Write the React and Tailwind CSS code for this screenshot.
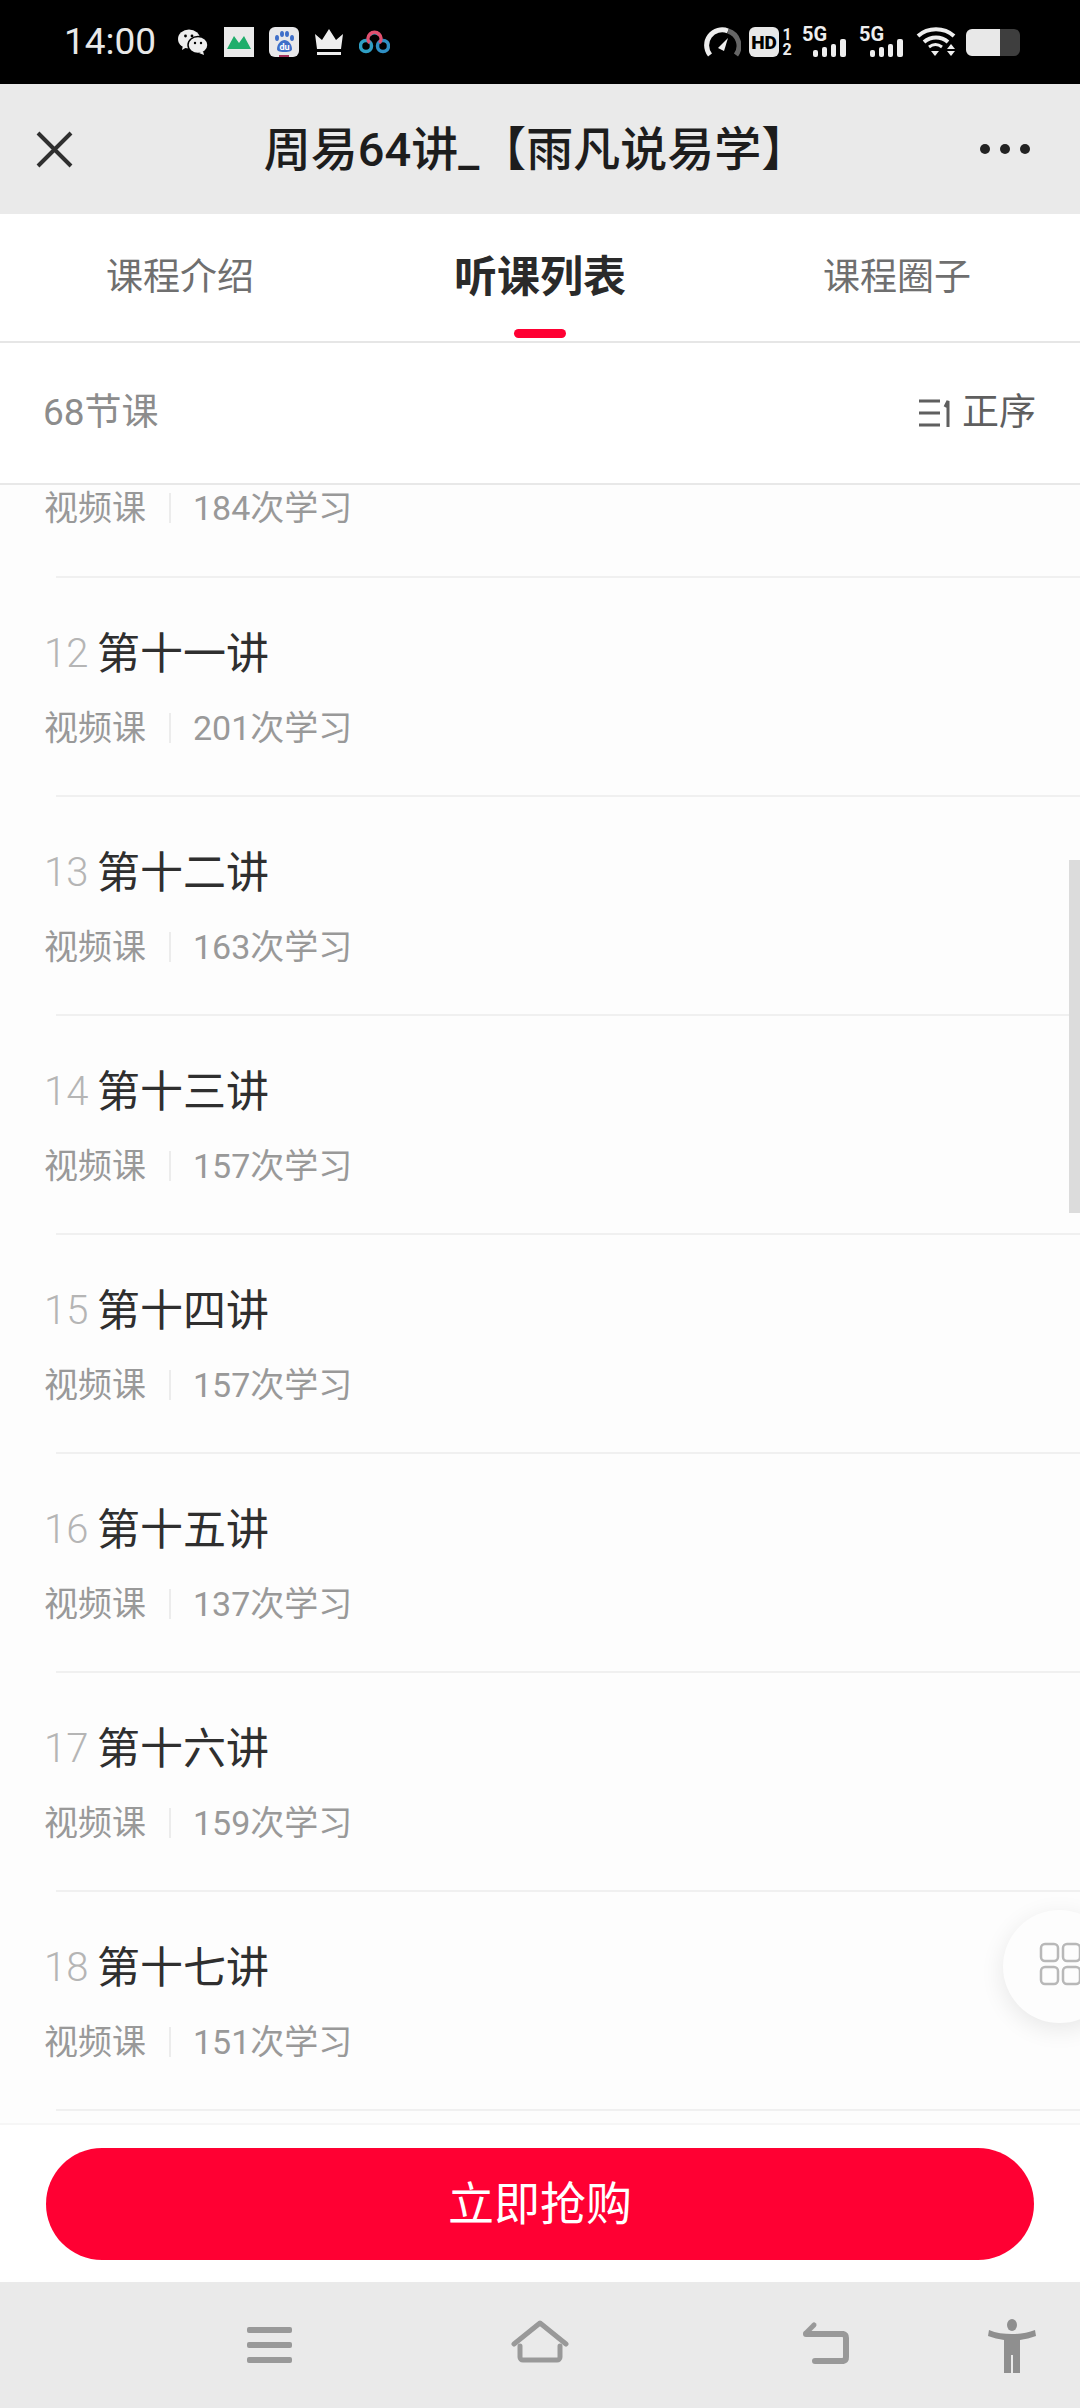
import React from "react";

const lessons = [
  { no: 12, title: "第十一讲", count: 201 },
  { no: 13, title: "第十二讲", count: 163 },
  { no: 14, title: "第十三讲", count: 157 },
  { no: 15, title: "第十四讲", count: 157 },
  { no: 16, title: "第十五讲", count: 137 },
  { no: 17, title: "第十六讲", count: 159 },
  { no: 18, title: "第十七讲", count: 151 },
];

function Meta({ count }) {
  return (
    <div className="flex items-center text-[34px] leading-[40px] text-[#999999]">
      <span>视频课</span>
      <span className="ml-[23px] h-[30px] w-[2px] bg-[#ececec]" />
      <span className="ml-[22px]">{count}次学习</span>
    </div>
  );
}

function StatusLeft() {
  return (
    <div className="flex items-center">
      <span className="text-[37px] leading-[44px] text-[#e8e8e8]">14:00</span>
      {/* wechat */}
      <svg className="ml-[22px]" width="30" height="26" viewBox="0 0 30 26">
        <ellipse cx="11" cy="10" rx="11" ry="9.5" fill="#eee" />
        <path d="M5 16l-1 5 5-3z" fill="#eee" />
        <ellipse cx="20" cy="16" rx="10" ry="8.5" fill="#eee" stroke="#000" strokeWidth="1.5" />
        <path d="M25 22l1 4-5-2z" fill="#eee" />
        <circle cx="7.5" cy="7" r="1.4" fill="#000" />
        <circle cx="14" cy="7" r="1.4" fill="#000" />
        <circle cx="17" cy="14" r="1.2" fill="#000" />
        <circle cx="23" cy="14" r="1.2" fill="#000" />
      </svg>
      {/* mountain */}
      <svg className="ml-[16px]" width="30" height="30" viewBox="0 0 30 30">
        <rect width="30" height="30" fill="#eaeaea" />
        <path d="M3 22L10 9l5 7 5-7 7 13z" fill="#1fae6b" />
      </svg>
      {/* baidu */}
      <svg className="ml-[15px]" width="30" height="30" viewBox="0 0 30 30">
        <rect width="30" height="30" rx="6" fill="#e8e8ea" />
        <ellipse cx="8" cy="11" rx="2" ry="3" fill="#3f6fc9" />
        <ellipse cx="13" cy="7" rx="2" ry="3" fill="#3f6fc9" />
        <ellipse cx="18" cy="7" rx="2" ry="3" fill="#3f6fc9" />
        <ellipse cx="23" cy="11" rx="2" ry="3" fill="#3f6fc9" />
        <path d="M8 22c0-5 4-9 7.500-9s7.500 4 7.500 9c0 2-2 3-7.500 3s-7.500-1-7.500-3z" fill="#3f6fc9" />
        <text x="15.500" y="23" textAnchor="middle" fontSize="9" fontWeight="700" fill="#fff" fontFamily="Roboto">du</text>
        <rect x="10" y="28" width="10" height="2" fill="#a5325e" />
      </svg>
      {/* crown */}
      <svg className="ml-[15px]" width="30" height="28" viewBox="0 0 30 28">
        <path d="M1 6l7 6 7-11 7 11 7-6-2 15H3z" fill="#eee" />
        <rect x="3" y="24" width="24" height="3" fill="#eee" />
      </svg>
      {/* loop logo */}
      <svg className="ml-[15px]" width="31" height="26" viewBox="0 0 31 26" fill="none">
        <path d="M11 5.500a7 7 0 0 1 9 0" stroke="#2f9fc4" strokeWidth="3.500" />
        <circle cx="7" cy="17" r="5.500" stroke="#2f9fc4" strokeWidth="3.500" />
        <circle cx="24" cy="17" r="5.500" stroke="#2f8fc4" strokeWidth="3.500" />
        <path d="M10.500 14a6.500 6.500 0 1 1 10 0" stroke="#e0506f" strokeWidth="3.500" />
      </svg>
    </div>
  );
}

function Signal() {
  return (
    <div className="relative h-[30px] w-[45px]">
      <span className="absolute left-0 top-[-4px] text-[20px] font-bold leading-[22px] text-[#eee]">5G</span>
      <svg className="absolute bottom-0 right-0" width="34" height="18" viewBox="0 0 34 18" fill="#eee">
        <rect x="0" y="11" width="5" height="7" rx="2" />
        <rect x="9" y="8" width="5" height="10" rx="2" />
        <rect x="18" y="5" width="5" height="13" rx="2" />
        <rect x="27" y="0" width="6" height="18" rx="2" />
      </svg>
    </div>
  );
}

function StatusRight() {
  return (
    <div className="flex items-center">
      {/* speed */}
      <svg width="37" height="30" viewBox="0 0 37 30" fill="none">
        <path d="M6 28A15.500 15.500 0 0 1 24 4" stroke="#eee" strokeWidth="5" />
        <path d="M24 4A15.500 15.500 0 0 1 32 28" stroke="#666" strokeWidth="5" />
        <path d="M14 21l10-10-4 13z" fill="#eee" />
      </svg>
      <div className="ml-[8px] flex h-[30px] w-[30px] items-center justify-center rounded-[6px] bg-[#e8e8e8] text-[19px] font-black leading-none text-black">
        HD
      </div>
      <div className="ml-[3px] flex w-[10px] flex-col items-center text-[16px] font-bold leading-[15px] text-[#eee]">
        <span>1</span>
        <span>2</span>
      </div>
      <div className="ml-[10px]">
        <Signal />
      </div>
      <div className="ml-[12px]">
        <Signal />
      </div>
      {/* wifi */}
      <svg className="ml-[12px]" width="40" height="30" viewBox="0 0 40 30" fill="none" stroke="#eee" strokeWidth="4">
        <path d="M2 9c10-9 26-9 36 0" />
        <path d="M8 15c7-6 17-6 24 0" />
        <path d="M13 20c4-3 9-3 13 0" strokeWidth="3" />
        <path d="M15 24h8l-4 5z" fill="#eee" stroke="none" />
        <path d="M35 17l4 5h-8z" fill="#eee" stroke="none" />
        <path d="M31 24h8l-4 5z" fill="#eee" stroke="none" />
      </svg>
      {/* battery */}
      <div className="ml-[10px] flex h-[27px] w-[54px] overflow-hidden rounded-[6px]">
        <div className="w-[34px] bg-[#e8e8e8]" />
        <div className="flex-1 bg-[#3e3e3e]" />
      </div>
    </div>
  );
}

export default function App() {
  return (
    <div className="relative flex h-[2408px] w-[1080px] flex-col overflow-hidden bg-[#fdfdfd] font-['Roboto','Noto_Sans_CJK_SC',sans-serif]">
      {/* status bar */}
      <div className="flex h-[84px] shrink-0 items-center justify-between bg-black pl-[64px] pr-[60px]">
        <StatusLeft />
        <StatusRight />
      </div>

      {/* title bar */}
      <div className="flex h-[130px] shrink-0 items-center justify-between bg-[#eaeaea] pl-[36px] pr-[50px]">
        <svg width="37" height="37" viewBox="0 0 37 37" stroke="#2f2f2f" strokeWidth="4" fill="none">
          <path d="M2 2l33 33M35 2L2 35" />
        </svg>
        <div className="ml-[19px] mt-[2px] text-[47px] font-medium leading-[50px] text-[#1d1d1d]">周易64讲_【雨凡说易学】</div>
        <div className="flex gap-[10px]">
          <span className="h-[10px] w-[10px] rounded-full bg-[#222]" />
          <span className="h-[10px] w-[10px] rounded-full bg-[#222]" />
          <span className="h-[10px] w-[10px] rounded-full bg-[#222]" />
        </div>
      </div>

      {/* tabs */}
      <div className="grid h-[129px] shrink-0 grid-cols-3 border-b-2 border-[#e6e6e6] bg-white">
        <div className="flex justify-center pt-[40px] text-[37px] leading-[48px] text-[#6f6f6f]">课程介绍</div>
        <div className="flex flex-col items-center pt-[37px]">
          <span className="text-[43px] font-bold leading-[52px] text-[#2a2a2a]">听课列表</span>
          <span className="mt-[26px] h-[9px] w-[52px] rounded-full bg-[#ff0033]" />
        </div>
        <div className="flex justify-center pr-[6px] pt-[40px] text-[37px] leading-[48px] text-[#6f6f6f]">课程圈子</div>
      </div>

      {/* count + sort */}
      <div className="flex h-[142px] shrink-0 items-center justify-between border-b-2 border-[#e8e8e8] bg-white pl-[43px] pr-[44px]">
        <span className="text-[37px] leading-[44px] text-[#8c8c8c]">68节课</span>
        <div className="flex items-center text-[37px] leading-[44px] text-[#5f5f5f]">
          <svg width="34" height="30" viewBox="0 0 34 30" fill="none" stroke="#5f5f5f" strokeWidth="3">
            <path d="M0 3h21M0 15h21M0 27h21" />
            <path d="M29 29V3l-3 6" />
          </svg>
          <span className="ml-[9px]">正序</span>
        </div>
      </div>

      {/* lesson list */}
      <div className="min-h-0 flex-1 overflow-hidden">
        <div className="h-[91px] pl-[44px] pt-[3px]">
          <Meta count={184} />
        </div>
        <div className="ml-[56px] h-[2px] bg-[#f0f0f0]" />
        {lessons.map((l) => (
          <div key={l.no}>
            <div className="h-[217px] pl-[44px] pt-[51px]">
              <div className="flex items-center leading-[50px]">
                <span className="w-[53px] text-[40px] font-light text-[#b5b5b5]">{l.no}</span>
                <span className="text-[43px] text-[#2f2f2f]">{l.title}</span>
              </div>
              <div className="mt-[29px]">
                <Meta count={l.count} />
              </div>
            </div>
            <div className="ml-[56px] h-[2px] bg-[#f0f0f0]" />
          </div>
        ))}
      </div>

      {/* buy button */}
      <div className="h-[159px] shrink-0 border-t-2 border-[#f6f6f6] bg-white px-[46px] pt-[23px]">
        <button className="flex h-[112px] w-full items-center justify-center rounded-full bg-[#ff0033] text-[46px] leading-none text-white">
          立即抢购
        </button>
      </div>

      {/* system nav */}
      <div className="flex h-[126px] shrink-0 items-start bg-[#eaeaea] pl-[247px] pt-[37px]">
        <svg className="mt-[8px]" width="45" height="36" viewBox="0 0 45 36" fill="#999">
          <rect y="0" width="45" height="6" rx="2" />
          <rect y="15" width="45" height="6" rx="2" />
          <rect y="30" width="45" height="6" rx="2" />
        </svg>
        <svg className="ml-[219px] mt-[1px]" width="58" height="43" viewBox="0 0 58 43" fill="none" stroke="#999" strokeWidth="5" strokeLinecap="round" strokeLinejoin="round">
          <path d="M3 24L29 3l26 21" />
          <path d="M9 26v11a3 3 0 0 0 3 3h34a3 3 0 0 0 3-3V26" />
        </svg>
        <svg className="ml-[232px] mt-[2px]" width="49" height="43" viewBox="0 0 49 43" fill="none" stroke="#999" strokeWidth="6" strokeLinecap="round" strokeLinejoin="round">
          <path d="M5 13h37a4 4 0 0 1 3 4v19a4 4 0 0 1-3 4H14" />
          <path d="M5 12l8-8" strokeWidth="5" />
        </svg>
        <svg className="ml-[138px]" width="48" height="54" viewBox="0 0 48 54" fill="#8f8f8f">
          <ellipse cx="24" cy="6" rx="5" ry="6" />
          <path d="M1 11c7 3 15 4 23 4s16-1 23-4l1 6c-5 2-11 3-16 4v33h-7V36h-2v18h-7V21c-5-1-11-2-16-4z" />
        </svg>
      </div>

      {/* scrollbar */}
      <div className="absolute left-[1069px] top-[860px] h-[353px] w-[11px] bg-[#dcdcdc]" />

      {/* floating grid button */}
      <div className="absolute left-[1003px] top-[1910px] flex h-[113px] w-[113px] rounded-full bg-[#fdfdfd] shadow-[0_6px_24px_rgba(0,0,0,0.09)]">
        <svg className="ml-[36px] mt-[32px]" width="42" height="44" viewBox="0 0 42 44" fill="none" stroke="#b8b8b8" strokeWidth="2.500">
          <rect x="2" y="2" width="17" height="17" rx="4" />
          <rect x="24" y="2" width="17" height="17" rx="4" />
          <rect x="2" y="25" width="17" height="17" rx="4" />
          <rect x="24" y="25" width="17" height="17" rx="4" />
        </svg>
      </div>
    </div>
  );
}
